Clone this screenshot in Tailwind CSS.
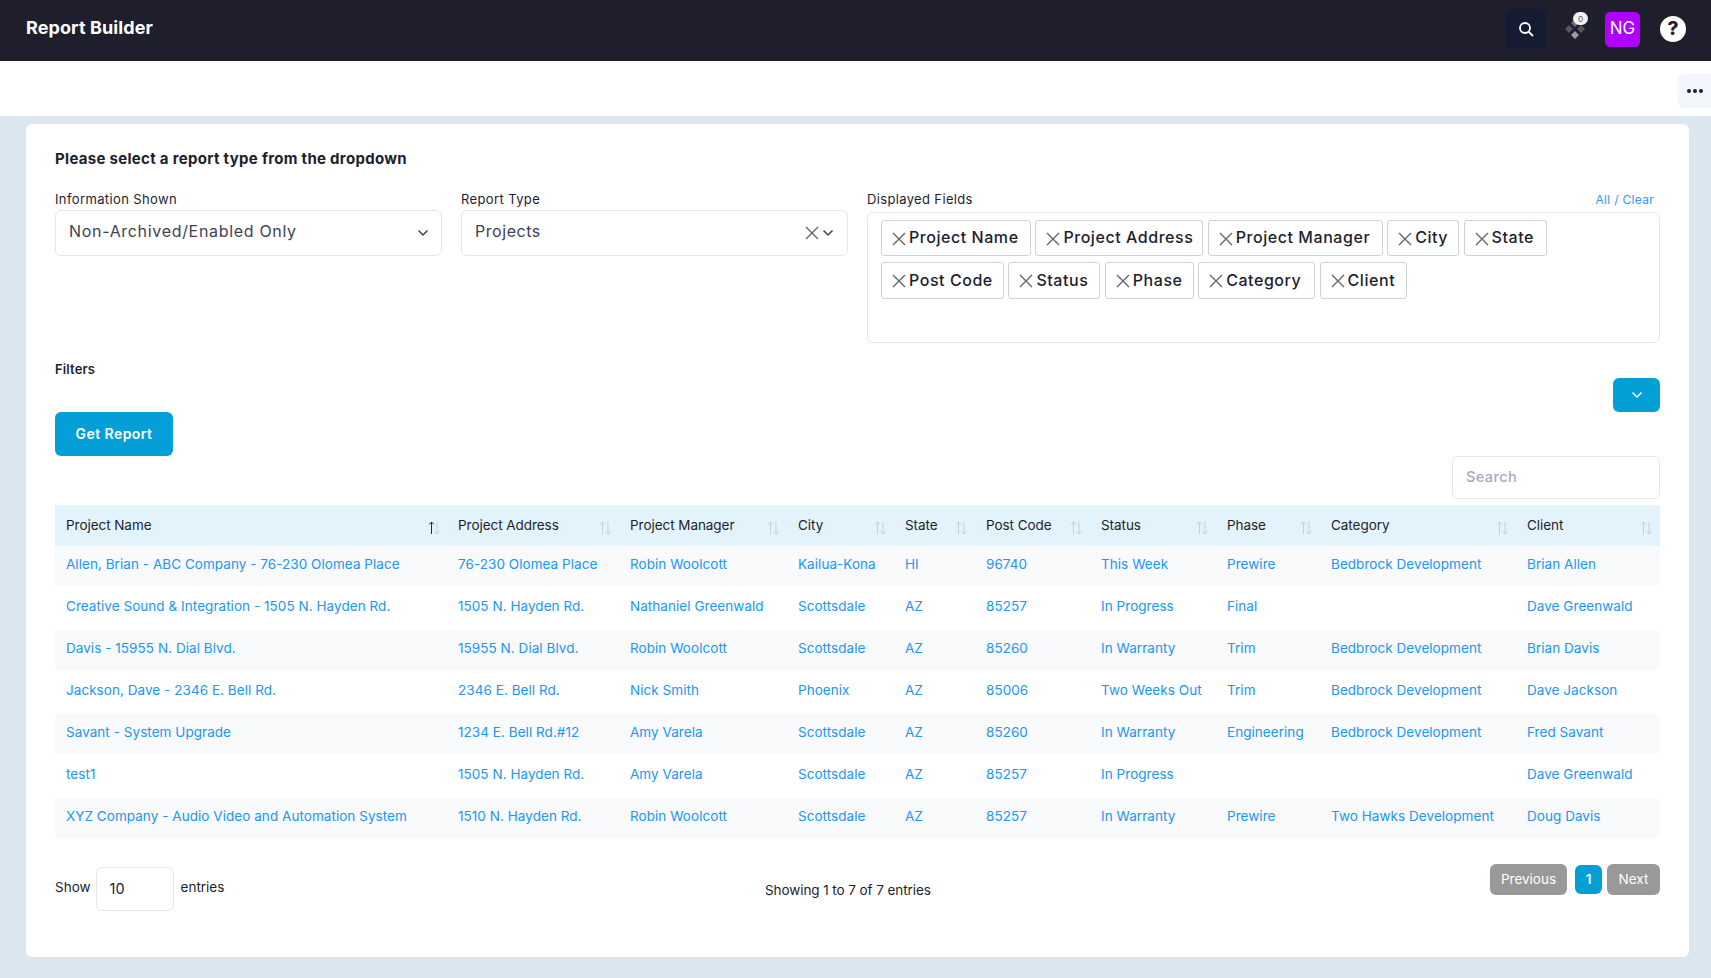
<!DOCTYPE html>
<html lang="en">

<head>
    <meta charset="UTF-8">
    <meta name="viewport" content="width=device-width, initial-scale=1.0">
    <script src="https://cdn.jsdelivr.net/npm/@tailwindcss/browser@4"></script>
    <title>Report Builder</title>
</head>

<body class="w-[1711px] h-[978px] overflow-hidden bg-[#dbe6ee] font-[Inter,sans-serif] text-[#1e1e2d]">

    <!-- Top bar -->
    <header class="flex items-center justify-between h-[61px] bg-[#1e1e2d] pl-[26px] pb-[3px]">
        <h1 class="pb-[3px] text-[18px] font-bold text-white tracking-[0.1px]">Report Builder</h1>
        <div class="flex items-center">
            <div class="flex items-center justify-center w-[40px] h-[40px] rounded-md bg-[#151b33]">
                <svg class="w-[16px] h-[16px] -mt-[1px]" viewBox="0 0 16 16" fill="none" stroke="white" stroke-width="1.8">
                    <circle cx="7" cy="7" r="5" />
                    <path d="M10.8 10.8 15 15" />
                </svg>
            </div>
            <div class="relative w-[20px] h-[20px] ml-[19px]">
                <svg class="w-[20px] h-[20px]" viewBox="0 0 20 20">
                    <path d="M10 0l4 4-4 4-4-4z" fill="#6e6e7c" />
                    <path d="M4 6l4 4-4 4-4-4z" fill="#55555f" />
                    <path d="M16 6l4 4-4 4-4-4z" fill="#55555f" />
                    <path d="M10 12l4 4-4 4-4-4z" fill="#9a9aa8" />
                </svg>
                <span class="absolute -top-[7px] left-[8px] flex items-center justify-center w-[15px] h-[13px] rounded-full bg-[#f1f1f4] text-[8px] leading-none text-[#555]">0</span>
            </div>
            <div class="flex items-center justify-center w-[35px] h-[35px] ml-[20px] rounded-[5px] bg-[#b000ff] text-[17px] text-white">NG</div>
            <div class="flex items-center justify-center w-[26px] h-[26px] ml-[20px] mr-[25px] rounded-full bg-white text-[19px] font-extrabold text-[#1e1e2d]">?</div>
        </div>
    </header>

    <!-- Toolbar strip -->
    <div class="flex items-center justify-end h-[55px] bg-white">
        <div class="flex items-center justify-center gap-[2px] w-[33px] h-[34px] mt-[5px] rounded-l-md bg-[#f3f6fa]">
            <span class="w-[4px] h-[4px] rounded-full bg-[#1e1e2d]"></span>
            <span class="w-[4px] h-[4px] rounded-full bg-[#1e1e2d]"></span>
            <span class="w-[4px] h-[4px] rounded-full bg-[#1e1e2d]"></span>
        </div>
    </div>

    <!-- Card -->
    <main class="w-[1663px] h-[833px] mt-[8px] ml-[26px] rounded-md bg-white px-[29px] pt-[25px]">
        <h2 class="h-[20px] text-[15px] leading-[20px] font-bold tracking-[0.3px]">Please select a report type from the dropdown</h2>

        <div class="grid grid-cols-[387px_387px_793px] gap-x-[19px] mt-[21px]">
            <div>
                <div class="h-[20px] text-[13px] leading-[18px] tracking-[0.38px]">Information Shown</div>
                <div class="flex items-center justify-between h-[46px] rounded-md border border-[#e4e6ef] pl-[13px] pr-[12px] pb-[4px] text-[16px] tracking-[0.68px] text-[#3f4254]">
                    <span>Non-Archived/Enabled Only</span>
                    <svg class="w-[12px] h-[8px] mt-[4px]" viewBox="0 0 12 8" fill="none" stroke="#3f4254" stroke-width="1.500">
                        <path d="M1.500 1.500 6 6l4.500-4.500" />
                    </svg>
                </div>
            </div>
            <div>
                <div class="h-[20px] text-[13px] leading-[18px] tracking-[0.38px]">Report Type</div>
                <div class="flex items-center justify-between h-[46px] rounded-md border border-[#e4e6ef] pl-[13px] pr-[13px] pb-[4px] text-[16px] tracking-[0.55px] text-[#3f4254]">
                    <span>Projects</span>
                    <div class="flex items-center gap-[3px] mt-[4px]">
                        <svg class="w-[14px] h-[14px]" viewBox="0 0 14 14" fill="none" stroke="#666" stroke-width="1.400">
                            <path d="M1 1l12 12M13 1 1 13" />
                        </svg>
                        <svg class="w-[12px] h-[8px]" viewBox="0 0 12 8" fill="none" stroke="#3f4254" stroke-width="1.500">
                            <path d="M1.500 1.500 6 6l4.500-4.500" />
                        </svg>
                    </div>
                </div>
            </div>
            <div>
                <div class="flex justify-between h-[22px] leading-[18px]">
                    <span class="text-[13px] tracking-[0.35px]">Displayed Fields</span>
                    <span class="pr-[6px] pt-[1px] text-[12px] tracking-[0.3px] text-[#2b9bf4]">All / Clear</span>
                </div>
                <div class="h-[131px] rounded-md border border-[#e4e6ef] pl-[13px] pt-[7px]">
                    <div class="flex gap-x-[4.400px] h-[36px]">
                        <span class="flex items-center gap-[3px] w-[150px] pl-[10px] pb-[2px] rounded-[3px] border border-[#cdd3dc] text-[16px] font-medium tracking-[0.55px]"><svg class="w-[14px] h-[14px] shrink-0 mt-[3px]" viewBox="0 0 14 14" fill="none" stroke="#666" stroke-width="1.400"><path d="M1 1l12 12M13 1 1 13" /></svg>Project Name</span>
                        <span class="flex items-center gap-[3px] w-[168px] pl-[10px] pb-[2px] rounded-[3px] border border-[#cdd3dc] text-[16px] font-medium tracking-[0.55px]"><svg class="w-[14px] h-[14px] shrink-0 mt-[3px]" viewBox="0 0 14 14" fill="none" stroke="#666" stroke-width="1.400"><path d="M1 1l12 12M13 1 1 13" /></svg>Project Address</span>
                        <span class="flex items-center gap-[3px] w-[175px] pl-[10px] pb-[2px] rounded-[3px] border border-[#cdd3dc] text-[16px] font-medium tracking-[0.55px]"><svg class="w-[14px] h-[14px] shrink-0 mt-[3px]" viewBox="0 0 14 14" fill="none" stroke="#666" stroke-width="1.400"><path d="M1 1l12 12M13 1 1 13" /></svg>Project Manager</span>
                        <span class="flex items-center gap-[3px] w-[72px] pl-[10px] pb-[2px] rounded-[3px] border border-[#cdd3dc] text-[16px] font-medium tracking-[0.55px]"><svg class="w-[14px] h-[14px] shrink-0 mt-[3px]" viewBox="0 0 14 14" fill="none" stroke="#666" stroke-width="1.400"><path d="M1 1l12 12M13 1 1 13" /></svg>City</span>
                        <span class="flex items-center gap-[3px] w-[83px] pl-[10px] pb-[2px] rounded-[3px] border border-[#cdd3dc] text-[16px] font-medium tracking-[0.55px]"><svg class="w-[14px] h-[14px] shrink-0 mt-[3px]" viewBox="0 0 14 14" fill="none" stroke="#666" stroke-width="1.400"><path d="M1 1l12 12M13 1 1 13" /></svg>State</span>
                    </div>
                    <div class="flex gap-x-[4.400px] h-[37px] mt-[6px]">
                        <span class="flex items-center gap-[3px] w-[123px] pl-[10px] pb-[1px] rounded-[3px] border border-[#cdd3dc] text-[16px] font-medium tracking-[0.55px]"><svg class="w-[14px] h-[14px] shrink-0 mt-[2px]" viewBox="0 0 14 14" fill="none" stroke="#666" stroke-width="1.400"><path d="M1 1l12 12M13 1 1 13" /></svg>Post Code</span>
                        <span class="flex items-center gap-[3px] w-[92px] pl-[10px] pb-[1px] rounded-[3px] border border-[#cdd3dc] text-[16px] font-medium tracking-[0.55px]"><svg class="w-[14px] h-[14px] shrink-0 mt-[2px]" viewBox="0 0 14 14" fill="none" stroke="#666" stroke-width="1.400"><path d="M1 1l12 12M13 1 1 13" /></svg>Status</span>
                        <span class="flex items-center gap-[3px] w-[89px] pl-[10px] pb-[1px] rounded-[3px] border border-[#cdd3dc] text-[16px] font-medium tracking-[0.55px]"><svg class="w-[14px] h-[14px] shrink-0 mt-[2px]" viewBox="0 0 14 14" fill="none" stroke="#666" stroke-width="1.400"><path d="M1 1l12 12M13 1 1 13" /></svg>Phase</span>
                        <span class="flex items-center gap-[3px] w-[117px] pl-[10px] pb-[1px] rounded-[3px] border border-[#cdd3dc] text-[16px] font-medium tracking-[0.55px]"><svg class="w-[14px] h-[14px] shrink-0 mt-[2px]" viewBox="0 0 14 14" fill="none" stroke="#666" stroke-width="1.400"><path d="M1 1l12 12M13 1 1 13" /></svg>Category</span>
                        <span class="flex items-center gap-[3px] w-[87px] pl-[10px] pb-[1px] rounded-[3px] border border-[#cdd3dc] text-[16px] font-medium tracking-[0.55px]"><svg class="w-[14px] h-[14px] shrink-0 mt-[2px]" viewBox="0 0 14 14" fill="none" stroke="#666" stroke-width="1.400"><path d="M1 1l12 12M13 1 1 13" /></svg>Client</span>
                    </div>
                </div>
            </div>
        </div>

        <div class="h-[18px] mt-[17px] text-[13px] leading-[18px] font-semibold tracking-[0.15px]">Filters</div>
        <div class="flex justify-end">
            <div class="flex items-center justify-center w-[47px] h-[34px] rounded-md bg-[#059fd8]">
                <svg class="w-[12px] h-[8px]" viewBox="0 0 12 8" fill="none" stroke="white" stroke-width="1.500">
                    <path d="M1.500 1.500 6 6l4.500-4.500" />
                </svg>
            </div>
        </div>
        <button class="block w-[118px] h-[44px] pb-[2px] rounded-md bg-[#059fd8] text-[14px] font-semibold text-white tracking-[0.45px]">Get Report</button>

        <div class="flex justify-end">
            <input class="w-[208px] h-[43px] rounded-md border border-[#e4e6ef] pl-[13px] pb-[2px] text-[14.500px] font-medium tracking-[0.4px] placeholder:text-[#a9a9c0]" type="text" placeholder="Search">
        </div>

        <table class="table-fixed w-[1605px] mt-[6px] border-collapse text-left text-[13.500px] tracking-[0.05px] whitespace-nowrap">
            <colgroup>
                <col class="w-[392px]"><col class="w-[172px]"><col class="w-[168px]"><col class="w-[107px]"><col class="w-[81px]"><col class="w-[115px]"><col class="w-[126px]"><col class="w-[104px]"><col class="w-[196px]"><col class="w-[144px]">
            </colgroup>
            <thead class="bg-[#e3f3fb] tracking-[-0.05px]">
                <tr class="h-[41px]">
                    <th class="pl-[11px] pr-[7px] font-normal"><div class="flex justify-between">Project Name<svg class="w-[12px] h-[14px] mt-[6px]" viewBox="0 0 12 14" fill="none" stroke-width="1"><path d="M3.500 13V1M1 3.500 3.500 1 6 3.500" stroke="#2a2a3c" /><path d="M9 1v12M6.500 10.500 9 13l2.500-2.500" stroke="#c4cfd6" /></svg></div></th>
                    <th class="pl-[11px] pr-[8px] font-normal"><div class="flex justify-between">Project Address<svg class="w-[12px] h-[14px] mt-[6px]" viewBox="0 0 12 14" fill="none" stroke="#c4cfd6" stroke-width="1"><path d="M3.500 13V1M1 3.500 3.500 1 6 3.500" /><path d="M9 1v12M6.500 10.500 9 13l2.500-2.500" /></svg></div></th>
                    <th class="pl-[11px] pr-[8px] font-normal"><div class="flex justify-between">Project Manager<svg class="w-[12px] h-[14px] mt-[6px]" viewBox="0 0 12 14" fill="none" stroke="#c4cfd6" stroke-width="1"><path d="M3.500 13V1M1 3.500 3.500 1 6 3.500" /><path d="M9 1v12M6.500 10.500 9 13l2.500-2.500" /></svg></div></th>
                    <th class="pl-[11px] pr-[8px] font-normal"><div class="flex justify-between">City<svg class="w-[12px] h-[14px] mt-[6px]" viewBox="0 0 12 14" fill="none" stroke="#c4cfd6" stroke-width="1"><path d="M3.500 13V1M1 3.500 3.500 1 6 3.500" /><path d="M9 1v12M6.500 10.500 9 13l2.500-2.500" /></svg></div></th>
                    <th class="pl-[11px] pr-[8px] font-normal"><div class="flex justify-between">State<svg class="w-[12px] h-[14px] mt-[6px]" viewBox="0 0 12 14" fill="none" stroke="#c4cfd6" stroke-width="1"><path d="M3.500 13V1M1 3.500 3.500 1 6 3.500" /><path d="M9 1v12M6.500 10.500 9 13l2.500-2.500" /></svg></div></th>
                    <th class="pl-[11px] pr-[8px] font-normal"><div class="flex justify-between">Post Code<svg class="w-[12px] h-[14px] mt-[6px]" viewBox="0 0 12 14" fill="none" stroke="#c4cfd6" stroke-width="1"><path d="M3.500 13V1M1 3.500 3.500 1 6 3.500" /><path d="M9 1v12M6.500 10.500 9 13l2.500-2.500" /></svg></div></th>
                    <th class="pl-[11px] pr-[8px] font-normal"><div class="flex justify-between">Status<svg class="w-[12px] h-[14px] mt-[6px]" viewBox="0 0 12 14" fill="none" stroke="#c4cfd6" stroke-width="1"><path d="M3.500 13V1M1 3.500 3.500 1 6 3.500" /><path d="M9 1v12M6.500 10.500 9 13l2.500-2.500" /></svg></div></th>
                    <th class="pl-[11px] pr-[8px] font-normal"><div class="flex justify-between">Phase<svg class="w-[12px] h-[14px] mt-[6px]" viewBox="0 0 12 14" fill="none" stroke="#c4cfd6" stroke-width="1"><path d="M3.500 13V1M1 3.500 3.500 1 6 3.500" /><path d="M9 1v12M6.500 10.500 9 13l2.500-2.500" /></svg></div></th>
                    <th class="pl-[11px] pr-[8px] font-normal"><div class="flex justify-between">Category<svg class="w-[12px] h-[14px] mt-[6px]" viewBox="0 0 12 14" fill="none" stroke="#c4cfd6" stroke-width="1"><path d="M3.500 13V1M1 3.500 3.500 1 6 3.500" /><path d="M9 1v12M6.500 10.500 9 13l2.500-2.500" /></svg></div></th>
                    <th class="pl-[11px] pr-[8px] font-normal"><div class="flex justify-between">Client<svg class="w-[12px] h-[14px] mt-[6px]" viewBox="0 0 12 14" fill="none" stroke="#c4cfd6" stroke-width="1"><path d="M3.500 13V1M1 3.500 3.500 1 6 3.500" /><path d="M9 1v12M6.500 10.500 9 13l2.500-2.500" /></svg></div></th>
                </tr>
            </thead>
            <tbody class="text-[#2196f3] [&_td]:pl-[11px] [&_td]:pb-[3px]">
                <tr class="h-[40px] bg-[#f8fafc]"><td>Allen, Brian - ABC Company - 76-230 Olomea Place</td><td>76-230 Olomea Place</td><td>Robin Woolcott</td><td>Kailua-Kona</td><td>HI</td><td>96740</td><td>This Week</td><td>Prewire</td><td>Bedbrock Development</td><td>Brian Allen</td></tr>
                <tr class="h-[44px]"><td>Creative Sound &amp; Integration - 1505 N. Hayden Rd.</td><td>1505 N. Hayden Rd.</td><td>Nathaniel Greenwald</td><td>Scottsdale</td><td>AZ</td><td>85257</td><td>In Progress</td><td>Final</td><td></td><td>Dave Greenwald</td></tr>
                <tr class="h-[40px] bg-[#f8fafc]"><td>Davis - 15955 N. Dial Blvd.</td><td>15955 N. Dial Blvd.</td><td>Robin Woolcott</td><td>Scottsdale</td><td>AZ</td><td>85260</td><td>In Warranty</td><td>Trim</td><td>Bedbrock Development</td><td>Brian Davis</td></tr>
                <tr class="h-[44px]"><td>Jackson, Dave - 2346 E. Bell Rd.</td><td>2346 E. Bell Rd.</td><td>Nick Smith</td><td>Phoenix</td><td>AZ</td><td>85006</td><td>Two Weeks Out</td><td>Trim</td><td>Bedbrock Development</td><td>Dave Jackson</td></tr>
                <tr class="h-[40px] bg-[#f8fafc]"><td>Savant - System Upgrade</td><td>1234 E. Bell Rd.#12</td><td>Amy Varela</td><td>Scottsdale</td><td>AZ</td><td>85260</td><td>In Warranty</td><td>Engineering</td><td>Bedbrock Development</td><td>Fred Savant</td></tr>
                <tr class="h-[44px]"><td>test1</td><td>1505 N. Hayden Rd.</td><td>Amy Varela</td><td>Scottsdale</td><td>AZ</td><td>85257</td><td>In Progress</td><td></td><td></td><td>Dave Greenwald</td></tr>
                <tr class="h-[40px] bg-[#f8fafc]"><td>XYZ Company - Audio Video and Automation System</td><td>1510 N. Hayden Rd.</td><td>Robin Woolcott</td><td>Scottsdale</td><td>AZ</td><td>85257</td><td>In Warranty</td><td>Prewire</td><td>Two Hawks Development</td><td>Doug Davis</td></tr>
            </tbody>
        </table>

        <!-- Footer -->
        <div class="grid grid-cols-[710px_1fr_auto] mt-[26px] text-[13.500px]">
            <div class="flex items-center h-[44px] mt-[3px]">
                <span class="pb-[4px]">Show</span>
                <div class="flex items-center w-[78px] h-[44px] ml-[5px] mr-[7px] rounded-md border border-[#e4e6ef] pl-[13px] text-[14.500px]">10</div>
                <span class="pb-[4px]">entries</span>
            </div>
            <div class="pt-[16px] tracking-[-0.08px]">Showing 1 to 7 of 7 entries</div>
            <div class="flex items-center h-[31px] text-white">
                <span class="flex items-center justify-center w-[77px] h-[31px] rounded-md bg-[#999]">Previous</span>
                <span class="flex items-center justify-center w-[27px] h-[29px] ml-[8px] rounded-md bg-[#059fd8] font-semibold">1</span>
                <span class="flex items-center justify-center w-[53px] h-[31px] ml-[5px] rounded-md bg-[#999]">Next</span>
            </div>
        </div>
    </main>

</body>

</html>
